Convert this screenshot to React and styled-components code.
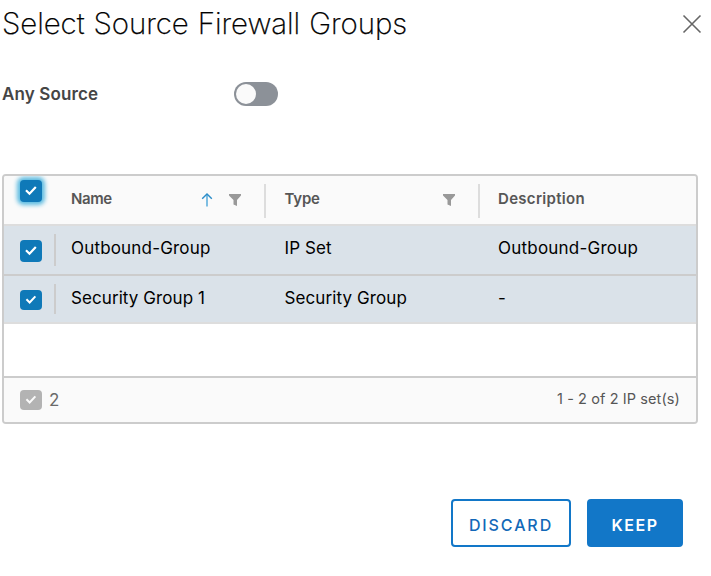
import React from "react";
import styled, { createGlobalStyle } from "styled-components";

const GlobalStyle = createGlobalStyle`
  * { box-sizing: border-box; }
  body { margin: 0; background: #fff; }
`;

const Dialog = styled.main`
  width: 711px;
  height: 576px;
  overflow: hidden;
  padding: 0 13px 0 2px;
  display: flex;
  flex-direction: column;
  font-family: Inter, "Liberation Sans", sans-serif;
  color: #000;
  background: #fff;
`;

const Header = styled.header`
  display: flex;
  justify-content: space-between;
  height: 48px;
`;

const Title = styled.h1`
  margin: 0;
  font-size: 29.5px;
  font-weight: 200;
  font-optical-sizing: none;
  line-height: 47px;
  letter-spacing: -0.08px;
  word-spacing: 0.8px;
  -webkit-text-stroke: 0.25px #000;
  white-space: nowrap;
`;

const CloseButton = styled.button`
  width: 20px;
  height: 20px;
  margin: 14px -4px 0 0;
  padding: 0;
  border: 0;
  background: none;
  svg { display: block; }
`;

const Field = styled.div`
  display: flex;
  align-items: center;
  height: 24px;
  margin-top: 34px;
`;

const FieldLabel = styled.span`
  width: 232px;
  font-size: 17px;
  font-weight: 600;
  line-height: 24px;
  letter-spacing: 0.12px;
  color: #454545;
`;

const Switch = styled.button`
  display: flex;
  width: 44px;
  height: 24px;
  padding: 2px;
  border: 0;
  border-radius: 12px;
  background: #8c9198;
`;

const Knob = styled.span`
  width: 20px;
  height: 20px;
  border-radius: 50%;
  background: #fafafa;
`;

const Grid = styled.section`
  display: flex;
  flex-direction: column;
  width: 696px;
  height: 250px;
  margin-top: 68px;
  border: 2px solid #ccc;
  border-radius: 4px;
  overflow: hidden;
`;

const Row = styled.div`
  display: grid;
  grid-template-columns: 52px 210px 214px 1fr;
  height: ${(p) => p.$height}px;
  background: ${(p) => (p.$head ? "#fafafa" : "#dae2e9")};
  border-bottom: 2px solid ${(p) => (p.$strong ? "#ccc" : "#ddd")};
`;

const CheckCell = styled.div`
  display: flex;
  align-items: flex-start;
  justify-content: space-between;
  padding: ${(p) => p.$top}px 0 0 16px;
`;

const RowDivider = styled.span`
  width: 2px;
  height: ${(p) => p.$height}px;
  margin-top: ${(p) => -p.$lift}px;
  background: #ccc;
`;

const Check = styled.span`
  display: flex;
  flex: none;
  width: 22px;
  height: ${(p) => p.$height || 22}px;
  border-radius: 4px;
  background: ${(p) => (p.$muted ? "#b3b3b3" : "#0f79b8")};
  box-shadow: ${(p) => (p.$focused ? "0 0 4px 2.5px #5cbbe0" : "none")};
`;

const Cell = styled.div`
  padding-left: ${(p) => p.$indent || 18}px;
  font-size: 17px;
  line-height: 44px;
  letter-spacing: ${(p) => p.$spacing || 0.1}px;
  white-space: nowrap;
`;

const HeadCell = styled.div`
  display: flex;
  height: 34px;
  margin-top: 8px;
  padding: 0 22px 0 ${(p) => p.$indent || 18}px;
  border-right: ${(p) => (p.$last ? "0" : "2px solid #ddd")};
  font-size: 15px;
  font-weight: 600;
  line-height: 30px;
  color: #565656;
  svg { margin-top: 8px; flex: none; }
`;

const HeadLabel = styled.span`
  flex: 1;
  letter-spacing: ${(p) => p.$spacing || 0}px;
`;

const Empty = styled.div`
  flex: 1;
`;

const Footer = styled.footer`
  display: flex;
  justify-content: space-between;
  height: 46px;
  padding: 0 16px;
  border-top: 2px solid #ccc;
  background: #fafafa;
  color: #565656;
`;

const Selected = styled.div`
  display: flex;
  gap: 7px;
  padding-top: 12px;
  font-size: 17px;
  line-height: 20px;
  color: #6a6a6a;
`;

const Range = styled.span`
  font-size: 14.5px;
  line-height: 42px;
  letter-spacing: 0.1px;
`;

const Actions = styled.div`
  display: flex;
  justify-content: flex-end;
  gap: 16px;
  margin-top: 75px;
  padding-right: 15px;
`;

const Button = styled.button`
  width: ${(p) => p.$width}px;
  height: 48px;
  padding: 4px 0 0;
  border: 2px solid #1277c8;
  border-radius: 4px;
  font: ${(p) => (p.$primary ? 600 : 500)} 16px Inter, "Liberation Sans", sans-serif;
  letter-spacing: ${(p) => (p.$primary ? 1.5 : 1.9)}px;
  color: ${(p) => (p.$primary ? "#fff" : "#1268b8")};
  background: ${(p) => (p.$primary ? "#1277c8" : "#fff")};
`;

function Checkbox(props) {
  return (
    <Check {...props}>
      <svg width="22" height={props.$height || 22} viewBox="0 0 22 22" fill="none">
        <path d="M6 10.2 9.5 13.7 15.8 7" stroke={props.$muted ? "#fafafa" : "#fff"} strokeWidth="2.2" />
      </svg>
    </Check>
  );
}

function CloseIcon() {
  return (
    <svg width="20" height="20" fill="none">
      <path d="M1.5 1.5 18.5 18.5M18.5 1.5 1.5 18.5" stroke="#666" strokeWidth="1.6" />
    </svg>
  );
}

function SortIcon() {
  return (
    <svg width="12" height="16" fill="none">
      <path d="M6 14.5V2" stroke="#5fafdc" strokeWidth="1.6" />
      <path d="M1.2 6.7 6 1.9 10.8 6.7" stroke="#2a8cc8" strokeWidth="1.4" />
    </svg>
  );
}

const FilterSvg = styled.svg`
  margin-left: 15px;
`;

function FilterIcon() {
  return (
    <FilterSvg width="14" height="16">
      <path d="M1 2H13V3.5L9 8V14L5.5 12.5V8L1 3.5Z" fill="#999" />
    </FilterSvg>
  );
}

const groups = [
  { name: "Outbound-Group", type: "IP Set", description: "Outbound-Group" },
  { name: "Security Group 1", type: "Security Group", description: "-" },
];

export default function App() {
  return (
    <>
      <GlobalStyle />
      <Dialog>
        <Header>
          <Title>Select Source Firewall Groups</Title>
          <CloseButton aria-label="Close"><CloseIcon /></CloseButton>
        </Header>
        <Field>
          <FieldLabel>Any Source</FieldLabel>
          <Switch role="switch" aria-checked="false" aria-label="Any Source"><Knob /></Switch>
        </Field>
        <Grid>
          <Row $head $height={50}>
            <CheckCell $top={4}><Checkbox $focused /></CheckCell>
            <HeadCell $indent={15}>
              <HeadLabel $spacing={-0.4}>Name</HeadLabel>
              <SortIcon />
              <FilterIcon />
            </HeadCell>
            <HeadCell $indent={18.5}>
              <HeadLabel $spacing={-0.2}>Type</HeadLabel>
              <FilterIcon />
            </HeadCell>
            <HeadCell $last>
              <HeadLabel $spacing={0.3}>Description</HeadLabel>
            </HeadCell>
          </Row>
          {groups.map((group, index) => (
            <Row key={group.name} $height={index ? 48 : 50} $strong={!index}>
              <CheckCell $top={14}>
                <Checkbox $height={index ? 20 : 22} />
                <RowDivider $lift={6} $height={index ? 30 : 32} />
              </CheckCell>
              <Cell $indent={15} $spacing={index ? 0.08 : 0.18}>{group.name}</Cell>
              <Cell $indent={18.5}>{group.type}</Cell>
              <Cell $spacing={0.22}>{group.description}</Cell>
            </Row>
          ))}
          <Empty />
          <Footer>
            <Selected><Checkbox $muted $height={20} />2</Selected>
            <Range>1 - 2 of 2 IP set(s)</Range>
          </Footer>
        </Grid>
        <Actions>
          <Button $width={120}>DISCARD</Button>
          <Button $primary $width={96}>KEEP</Button>
        </Actions>
      </Dialog>
    </>
  );
}
